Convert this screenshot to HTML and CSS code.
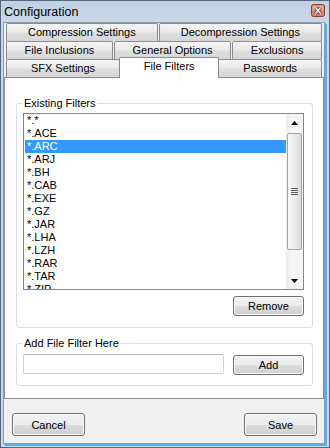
FILE: index.html
```html
<!DOCTYPE html>
<html lang="en">
<head>
    <meta charset="UTF-8">
    <title>Configuration</title>
    <link rel="stylesheet" href="styles.css">
</head>
<body>
    <div class="janela">
        <div class="titulo">
            <span>Configuration</span>
            <svg class="fechar" width="14" height="13" viewBox="0 0 14 13">
                <rect x="0.5" y="0.5" width="13" height="12" rx="2" fill="#d9826f" stroke="#8e3b2d"/>
                <rect x="1.5" y="1.5" width="11" height="5" rx="1" fill="#e7a89a"/>
                <path d="M4.5 3.5 L9.5 9.5 M9.5 3.5 L4.5 9.5" stroke="#5a2a22" stroke-width="3.2"/>
                <path d="M4.5 3.5 L9.5 9.5 M9.5 3.5 L4.5 9.5" stroke="#ffffff" stroke-width="1.6"/>
            </svg>
        </div>
        <div class="cliente">
            <div class="abas">
                <div class="linha">
                    <div class="aba">Compression Settings</div>
                    <div class="aba">Decompression Settings</div>
                </div>
                <div class="linha">
                    <div class="aba">File Inclusions</div>
                    <div class="aba">General Options</div>
                    <div class="aba">Exclusions</div>
                </div>
                <div class="linha">
                    <div class="aba">SFX Settings</div>
                    <div class="aba ativa">File Filters</div>
                    <div class="aba">Passwords</div>
                </div>
            </div>
            <div class="painel">
                <fieldset class="grupo">
                    <legend>Existing Filters</legend>
                    <div class="lista">
                        <ul class="itens">
                            <li>*.*</li>
                            <li>*.ACE</li>
                            <li class="selecionado">*.ARC</li>
                            <li>*.ARJ</li>
                            <li>*.BH</li>
                            <li>*.CAB</li>
                            <li>*.EXE</li>
                            <li>*.GZ</li>
                            <li>*.JAR</li>
                            <li>*.LHA</li>
                            <li>*.LZH</li>
                            <li>*.RAR</li>
                            <li>*.TAR</li>
                            <li>*.ZIP</li>
                        </ul>
                        <div class="rolagem">
                            <div class="seta">
                                <svg width="7" height="4" viewBox="0 0 7 4"><path d="M3.5 0 L7 4 L0 4 Z" fill="#000"/></svg>
                            </div>
                            <div class="trilha">
                                <div class="polegar">
                                    <svg width="7" height="7" viewBox="0 0 7 7"><path d="M0 0.5 H7 M0 2.5 H7 M0 4.5 H7 M0 6.5 H7" stroke="#5e5e5e"/></svg>
                                </div>
                            </div>
                            <div class="seta">
                                <svg width="7" height="4" viewBox="0 0 7 4"><path d="M0 0 L7 0 L3.5 4 Z" fill="#000"/></svg>
                            </div>
                        </div>
                    </div>
                    <div class="acoes">
                        <button class="botao">Remove</button>
                    </div>
                </fieldset>
                <fieldset class="grupo novo">
                    <legend>Add File Filter Here</legend>
                    <div class="entrada">
                        <input type="text" class="campo">
                        <button class="botao">Add</button>
                    </div>
                </fieldset>
            </div>
            <div class="rodape">
                <button class="botao grande">Cancel</button>
                <button class="botao grande">Save</button>
            </div>
        </div>
    </div>
</body>
</html>
```

FILE: styles.css
```css
*{
    margin: 0;
    padding: 0;
    box-sizing: border-box;
}
body{
    font-family: "Liberation Sans", Arial, sans-serif;
    font-size: 11px;
    color: black;
}
.janela{
    width: 330px;
    height: 448px;
    background: linear-gradient(#c0d1e4, #cad8e8 22px, #cad8e8);
    border: 1px solid #56687e;
    padding: 0 4px 3px 2px;
    display: flex;
    flex-direction: column;
}
.titulo{
    height: 21px;
    display: flex;
    align-items: center;
    justify-content: space-between;
    padding-left: 1px;
    font-size: 12.5px;
}
.fechar{
    display: block;
    margin-top: -3px;
}
.cliente{
    flex: 1;
    background-color: #f0f0f0;
    border: 1px solid #8d9cad;
    box-shadow: 1px 1px 0 #4eb3e9, 2px 2px 0 #4eb3e9;
    display: flex;
    flex-direction: column;
}
.abas{
    margin: 0 2px;
}
.linha{
    display: flex;
    gap: 1px;
    height: 18px;
}
.aba{
    flex: 1 1 auto;
    height: 18px;
    line-height: 17px;
    text-align: center;
    white-space: nowrap;
    border: 1px solid #898c95;
    border-bottom: none;
    border-radius: 2px 2px 0 0;
    background: linear-gradient(#f5f5f5, #ebebeb 45%, #dedede 55%, #d6d6d6);
}
.aba.ativa{
    position: relative;
    z-index: 2;
    margin: -2px -2px 0;
    height: 21px;
    line-height: 17px;
    padding-bottom: 3px;
    background: white;
}
.painel{
    height: 322px;
    border: 1px solid #898c95;
    background-color: white;
    padding: 18px 10px 0 11px;
}
.grupo{
    border: 1px solid #d5dfe5;
    border-radius: 3px;
    padding: 0 8px 11px 6px;
}
.grupo legend{
    line-height: 14px;
    padding: 0 1px;
}
.lista{
    display: flex;
    height: 177px;
    margin-top: 3px;
    border: 1px solid #828790;
    overflow: hidden;
}
.itens{
    flex: 1;
    list-style: none;
    padding-left: 1px;
    overflow: hidden;
}
.itens li{
    height: 13px;
    line-height: 13px;
    padding-left: 2px;
}
.itens .selecionado{
    background-color: #3399ff;
    color: white;
}
.rolagem{
    width: 17px;
    display: flex;
    flex-direction: column;
    background: linear-gradient(90deg, #ececec, #f5f5f5 30%, #f5f5f5);
}
.seta{
    height: 17px;
    display: flex;
    align-items: center;
    justify-content: center;
}
.seta svg{
    display: block;
}
.trilha{
    flex: 1;
    padding: 2px 1px 0;
}
.polegar{
    height: 117px;
    border: 1px solid #a3a3a3;
    border-radius: 2px;
    background: linear-gradient(90deg, #f9f9f9, #ececec 50%, #dadada);
    display: flex;
    align-items: center;
    justify-content: center;
}
.polegar svg{
    display: block;
}
.acoes{
    display: flex;
    justify-content: flex-end;
    margin-top: 6px;
}
.botao{
    width: 71px;
    height: 20px;
    font-family: "Liberation Sans", Arial, sans-serif;
    font-size: 11px;
    color: black;
    border: 1px solid #707070;
    border-radius: 3px;
    box-shadow: inset 0 0 0 1px #fbfbfb;
    background: linear-gradient(#f2f2f2, #ebebeb 50%, #dddddd 50%, #cfcfcf);
}
.grupo.novo{
    margin-top: 8px;
    padding-bottom: 10px;
}
.entrada{
    display: flex;
    align-items: center;
    justify-content: space-between;
    margin-top: 3px;
}
.campo{
    width: 201px;
    height: 20px;
    border: 1px solid #d0d4d9;
    border-top-color: #b5b9bf;
    border-radius: 2px;
    background-color: white;
}
.entrada .botao{
    margin-top: 2px;
}
.rodape{
    display: flex;
    justify-content: space-between;
    padding: 14px 7px 0 8px;
}
.botao.grande{
    width: 73px;
    height: 23px;
}
```
